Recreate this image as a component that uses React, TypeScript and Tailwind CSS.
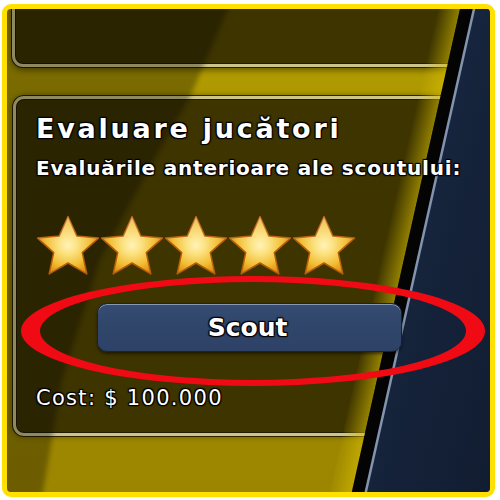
import React from "react";

const shadow = "[text-shadow:0_0_2px_#000,1px_1px_1px_#000,-1px_-1px_1px_#000,1px_-1px_1px_#000,-1px_1px_1px_#000]";

function Star({ i }: { i: number }) {
  const g = `sg${i}`;
  const h = `sh${i}`;
  const pts =
    "32,1.5 40.8,20.9 62.4,23.1 46.3,37.6 50.8,58.9 32,48 13.2,58.9 17.7,37.6 1.6,23.1 23.2,20.9";
  return (
    <svg width="64" height="60" viewBox="0 0 64 60" className="shrink-0">
      <defs>
        <radialGradient id={g} cx="50%" cy="50%" r="55%">
          <stop offset="0" stopColor="#fff3b8" />
          <stop offset="0.3" stopColor="#fbe07c" />
          <stop offset="0.65" stopColor="#f2bf36" />
          <stop offset="1" stopColor="#dc880e" />
        </radialGradient>
        <linearGradient id={h} x1="0" y1="0" x2="0" y2="1">
          <stop offset="0" stopColor="#ffffff" stopOpacity="0.35" />
          <stop offset="0.5" stopColor="#ffffff" stopOpacity="0" />
        </linearGradient>
      </defs>
      <polygon points={pts} fill={`url(#${g})`} stroke="#b85e06" strokeWidth="1.5" strokeLinejoin="round" />
      <polygon points={pts} fill={`url(#${h})`} />
    </svg>
  );
}

export default function App() {
  return (
    <div className="w-[500px] h-[500px] bg-white pt-[4px] pl-[2px] font-['DejaVu_Sans',sans-serif]">
      <div className="relative w-[493px] h-[493px] border-[5px] border-[#ffe000] rounded-[9px] overflow-hidden bg-[linear-gradient(180deg,#a89000_0%,#b09a00_14%,#a08a00_60%,#9c8600_100%)] flex flex-col">
        {/* top panel */}
        <div className="ml-[5px] -mt-[12px] h-[70px] w-[480px] shrink-0 rounded-[11px] border-[3px] border-[#cdc48c] bg-[#3d3400] shadow-[0_0_0_1px_#2a2200,0_3px_6px_rgba(0,0,0,0.45),inset_0_0_0_1px_#221b00]" />
        {/* main panel */}
        <div className="ml-[6px] mt-[29px] w-[473px] h-[340px] shrink-0 rounded-[11px] border-[3px] border-[#cdc48c] bg-[#3e3400] shadow-[0_0_0_1px_#2a2200,0_0_6px_rgba(0,0,0,0.45),inset_0_0_0_1px_#221b00] pt-[16px] pl-[20px] flex flex-col items-start text-white">
          <div className={`relative z-20 text-[27px] leading-[27px] font-bold tracking-[2.75px] whitespace-nowrap ${shadow}`}>
            Evaluare jucători
          </div>
          <div className={`relative z-20 mt-[16px] text-[20px] leading-[20px] font-bold tracking-[0.8px] whitespace-nowrap ${shadow}`}>
            Evaluările anterioare ale scoutului:
          </div>
          <div className="relative z-20 mt-[37px] flex h-[60px]">
            {[0, 1, 2, 3, 4].map((i) => (
              <Star key={i} i={i} />
            ))}
          </div>
          <button className="relative z-20 mt-[28px] ml-[61px] w-[305px] h-[49px] rounded-[10px] bg-[linear-gradient(180deg,#364c72_0%,#30466a_40%,#2d4266_100%)] border border-[#18233a] shadow-[inset_0_1px_0_#8698b6,0_2px_3px_rgba(0,0,0,0.5)] flex items-center justify-center">
            <span className={`-ml-[4px] text-[25px] leading-[25px] font-bold text-white ${shadow}`}>Scout</span>
          </button>
          <div className={`relative z-20 mt-[36px] text-[21px] leading-[21px] tracking-[1.3px] text-white whitespace-nowrap ${shadow}`}>
            Cost: $ 100.000
          </div>
        </div>

        {/* diagonal darker light band */}
        <svg className="absolute -left-[7px] -top-[9px] w-[500px] h-[500px] z-10 pointer-events-none" viewBox="0 0 500 500">
          <defs>
            <filter id="blurBand" x="-10%" y="-10%" width="120%" height="120%">
              <feGaussianBlur stdDeviation="2.5" />
            </filter>
          </defs>
          <path
            d="M-10 -10 L236 -10 L190 97 L143 180 L100 260 L62 380 L40 510 L-10 510 Z"
            fill="#000"
            opacity="0.3"
            filter="url(#blurBand)"
          />
        </svg>

        {/* right navy region (behind text and button) */}
        <svg className="absolute -left-[7px] -top-[9px] w-[500px] h-[500px] z-[15] pointer-events-none" viewBox="0 0 500 500">
          <defs>
            <linearGradient id="glow" gradientUnits="userSpaceOnUse" x1="384" y1="245" x2="406" y2="250">
              <stop offset="0" stopColor="#d8c000" stopOpacity="0" />
              <stop offset="1" stopColor="#d8c000" stopOpacity="0.55" />
            </linearGradient>
            <linearGradient id="navy" x1="0" y1="0" x2="1" y2="1">
              <stop offset="0" stopColor="#1d2e4c" />
              <stop offset="0.5" stopColor="#15233b" />
              <stop offset="1" stopColor="#111c2f" />
            </linearGradient>
          </defs>
          <polygon points="440,0 462,0 350,500 328,500" fill="url(#glow)" />
          <polygon points="462,0 476,0 364,500 350,500" fill="#040404" />
          <polygon points="476,0 500,0 500,500 364,500" fill="url(#navy)" />
          <line x1="476" y1="0" x2="364" y2="500" stroke="#8494ae" strokeWidth="2.5" />
        </svg>

        {/* red ellipse annotation */}
        <svg className="absolute -left-[7px] -top-[9px] w-[500px] h-[500px] z-40 pointer-events-none" viewBox="0 0 500 500">
          <path
            fillRule="evenodd"
            fill="#f00a14"
            d="M21 331 A232 55 0 1 0 485 331 A232 55 0 1 0 21 331 Z M40 331 A213 49 0 1 0 466 331 A213 49 0 1 0 40 331 Z"
          />
        </svg>
      </div>
    </div>
  );
}
